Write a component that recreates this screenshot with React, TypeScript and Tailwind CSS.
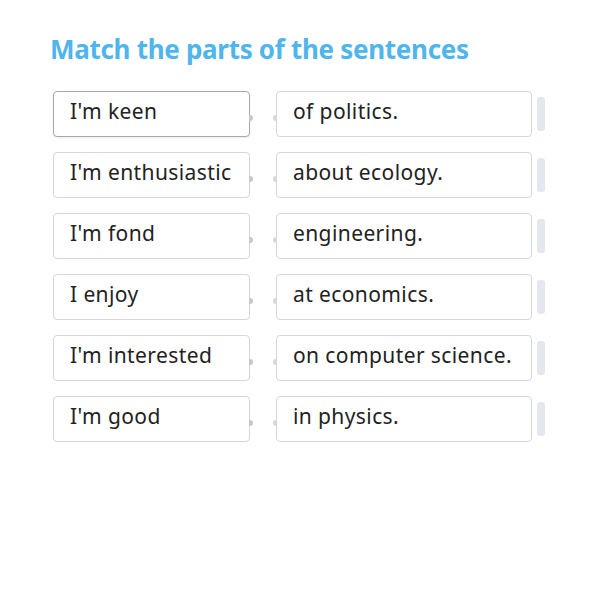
import React from "react";

const rows = [
  ["I'm keen", "of politics."],
  ["I'm enthusiastic", "about ecology."],
  ["I'm fond", "engineering."],
  ["I enjoy", "at economics."],
  ["I'm interested", "on computer science."],
  ["I'm good", "in physics."],
];

export default function App() {
  return (
    <div
      className="w-[592px] h-[593px] bg-white pl-[50px] pt-[33px]"
      style={{ fontFamily: '"Noto Sans", sans-serif' }}
    >
      <h1 className="text-[26px] leading-[32px] font-bold text-[#4fb5ec] tracking-[-0.3px]">
        Match the parts of the sentences
      </h1>
      <div className="mt-[26px] ml-[3px] flex flex-col gap-[15px]">
        {rows.map(([l, r], i) => (
          <div key={i} className="flex items-center">
            <div
              className={`relative w-[197px] h-[46px] rounded-[4px] border bg-white flex items-center pl-[16px] pb-[4px] text-[21px] tracking-[0.4px] text-[#222]  ${
                i === 0 ? "border-[#a9a9a9] shadow-[0_1px_2px_rgba(0,0,0,0.08)]" : "border-[#d6d6d6]"
              }`}
            >
              {l}
              <span className="absolute right-[-4px] top-[23px] w-[4px] h-[6px] rounded-r-full bg-[#c8c8c8]" />
            </div>
            <div className="relative ml-[26px] w-[256px] h-[46px] rounded-[4px] border border-[#d6d6d6] bg-white flex items-center pl-[16px] pb-[4px] text-[21px] tracking-[0.4px] text-[#222]">
              {r}
              <span className="absolute left-[-4px] top-[23px] w-[4px] h-[6px] rounded-l-full bg-[#d8d8d8]" />
            </div>
            <div className="ml-[5px] w-[8px] h-[34px] rounded-[3px] bg-[#e4e8ee]" />
          </div>
        ))}
      </div>
    </div>
  );
}
